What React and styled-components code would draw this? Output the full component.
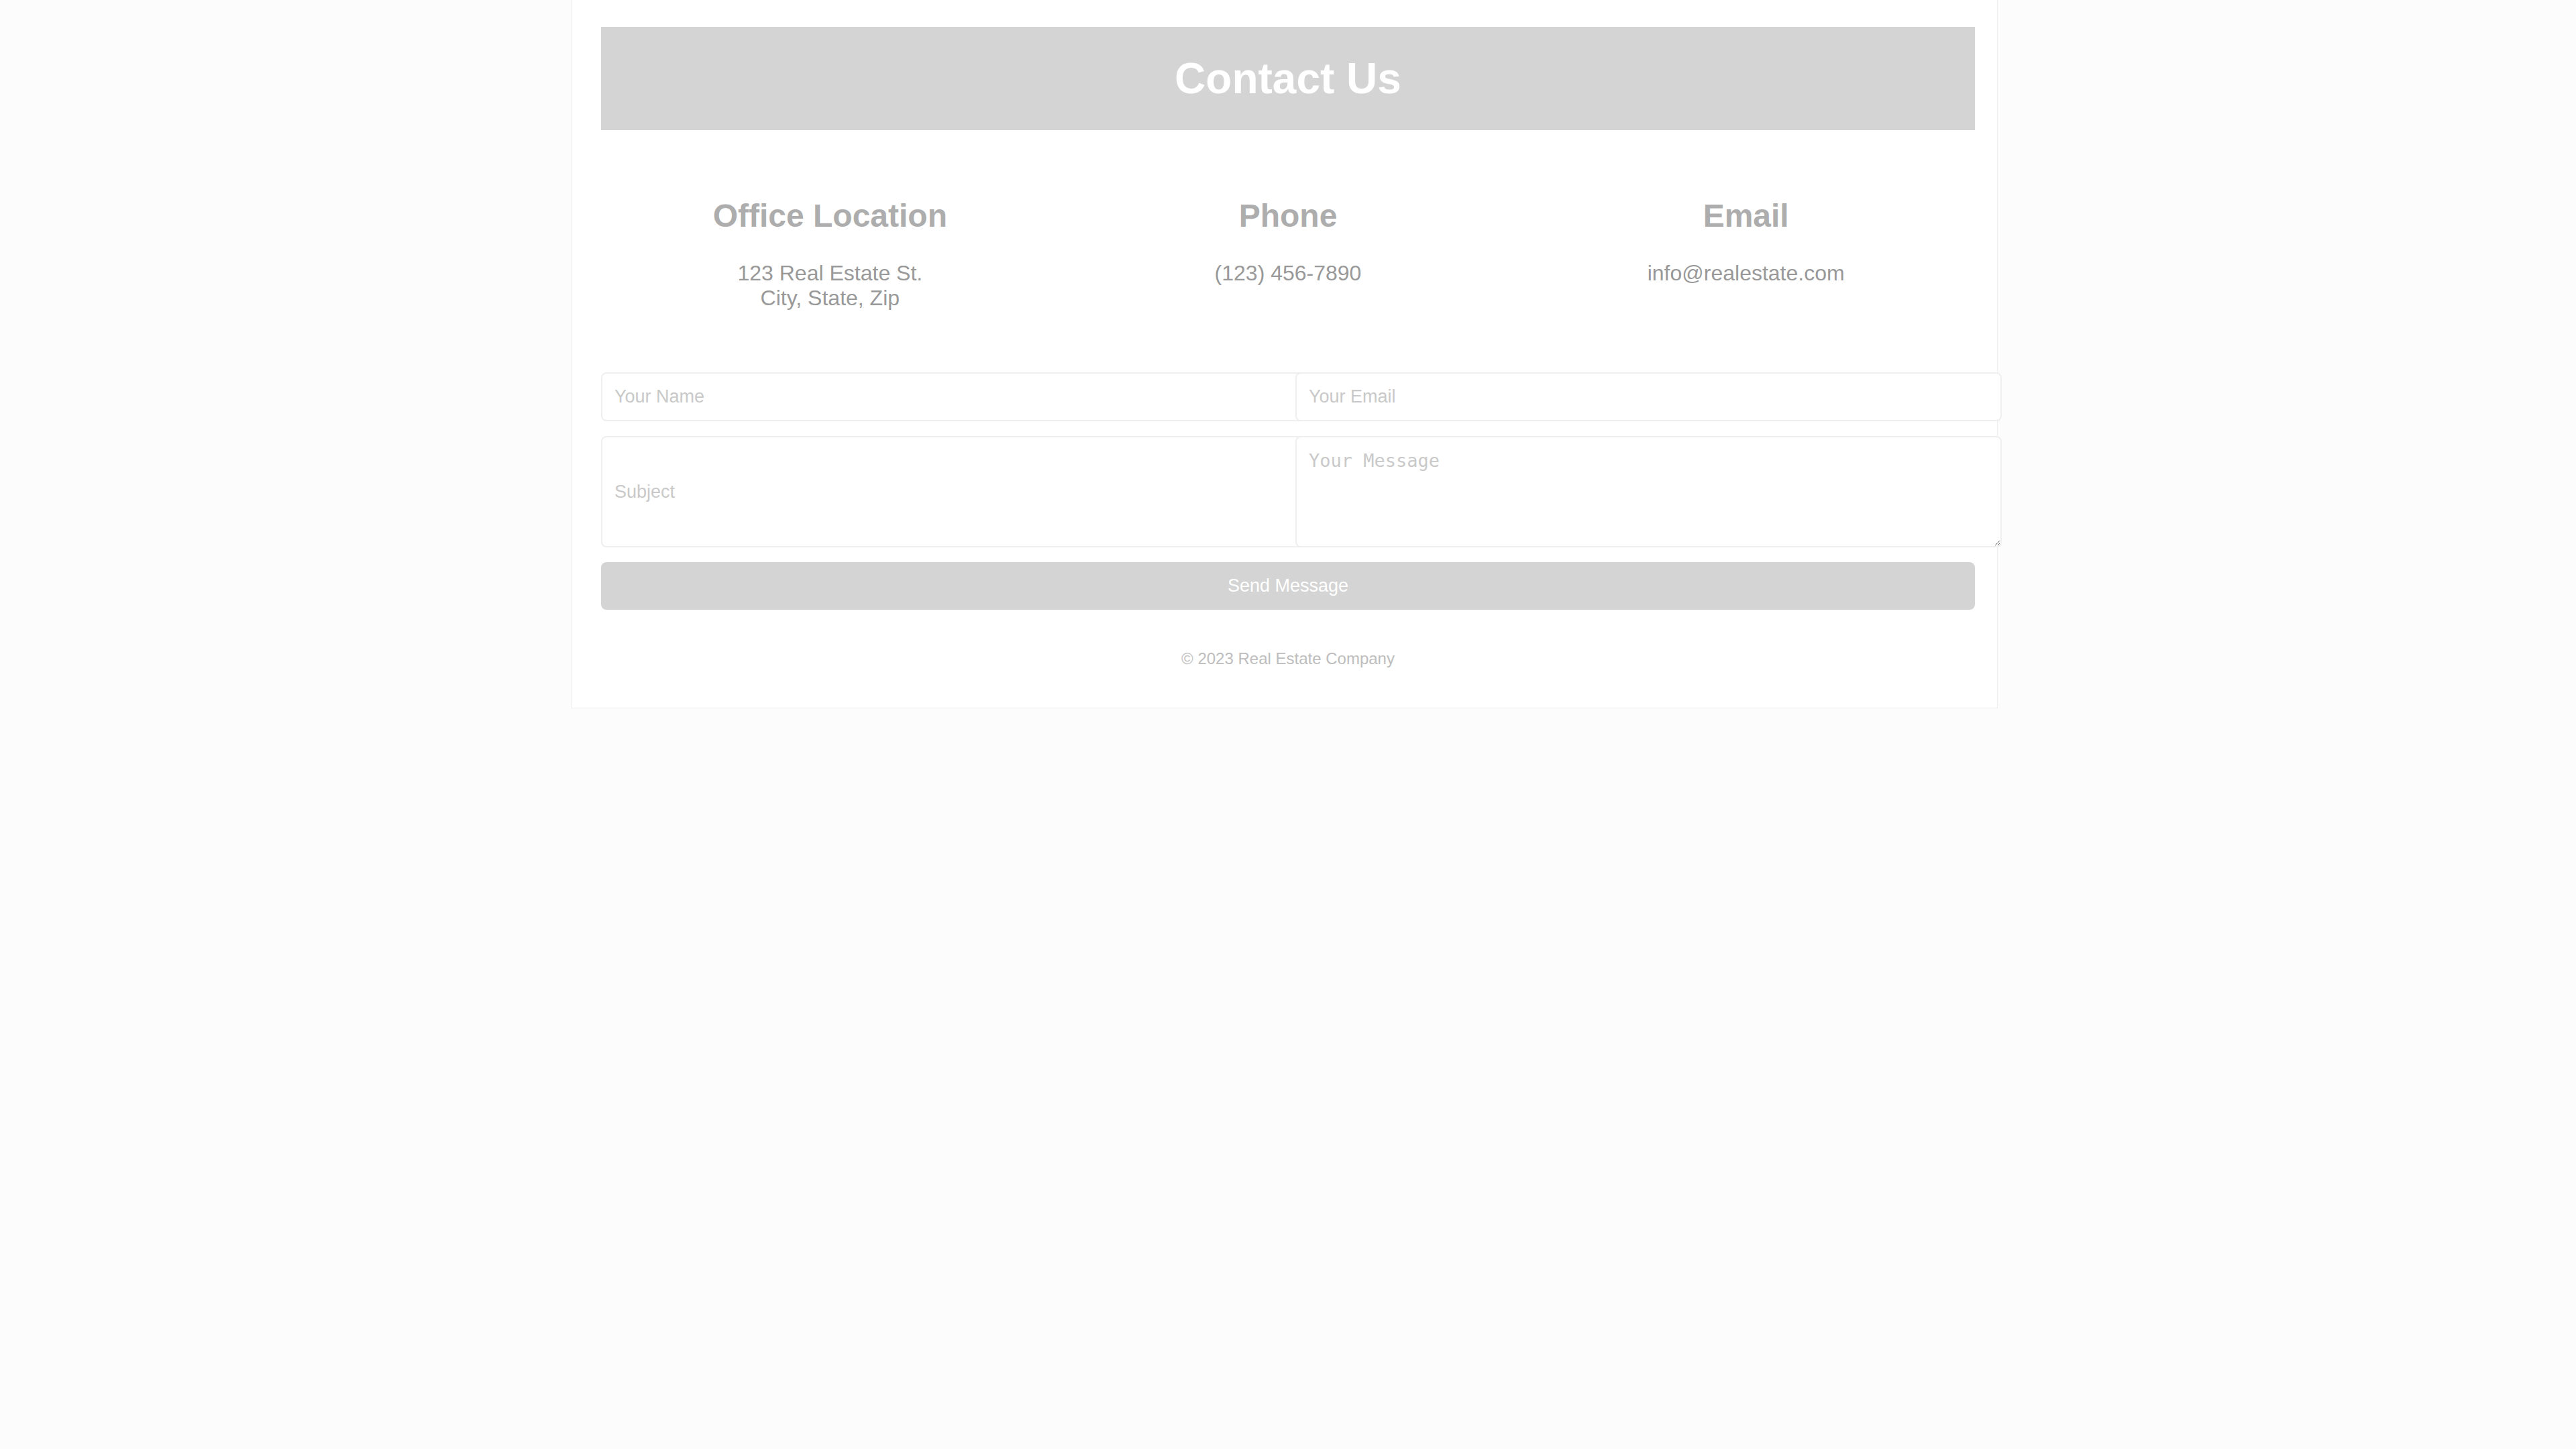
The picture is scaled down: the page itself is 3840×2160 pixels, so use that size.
import React from 'react'
import styled, { createGlobalStyle } from 'styled-components';

const GlobalStyle = createGlobalStyle`
    body {
        margin: 0;
        background-color: #fcfcfc;
        font-family: 'Liberation Sans', Arial, sans-serif;
    }
`;

const PageWrapper = styled.div`
    width: 2048px;
    margin-left: calc(50% - 1069px);
    padding: 40px 33px 44px 44px;
    background-color: #ffffff;
    border: 1px solid #eeeeee;
    border-top: none;
`;

const Banner = styled.header`
    background-color: #d4d4d4;
    padding: 40px 0;
    text-align: center;
`;

const Title = styled.h1`
    margin: 0;
    font-size: 64px;
    font-weight: bold;
    color: #ffffff;
`;

const InfoRow = styled.section`
    display: grid;
    grid-template-columns: repeat(3, 1fr);
    margin: 100px 0 92px;
    text-align: center;
`;

const InfoTitle = styled.h3`
    margin: 0 0 40px;
    font-size: 48px;
    font-weight: bold;
    color: #adadad;
`;

const InfoText = styled.p`
    margin: 0;
    font-size: 32px;
    color: #999999;
`;

const ContactForm = styled.form`
    display: grid;
    grid-template-columns: 1fr 1fr;
    gap: 22px;
`;

const Field = styled.input`
    box-sizing: content-box;
    width: 100%;
    padding: 19px 18px;
    margin: 0;
    border: 2px solid #efefef;
    border-radius: 8px;
    background-color: #ffffff;
    font-family: 'Liberation Sans', Arial, sans-serif;
    font-size: 27px;
    color: #777;
    outline: none;
    &::placeholder {
        color: #c9c9c9;
    }
`;

const MessageBox = styled.textarea`
    box-sizing: content-box;
    width: 100%;
    height: 124px;
    padding: 19px 18px;
    margin: 0;
    border: 2px solid #efefef;
    border-radius: 8px;
    background-color: #ffffff;
    font-family: 'DejaVu Sans Mono', monospace;
    font-size: 27px;
    color: #777;
    outline: none;
    &::placeholder {
        color: #c9c9c9;
    }
`;

const SendButton = styled.button`
    grid-column: 1 / -1;
    padding: 20px 0;
    border: none;
    border-radius: 8px;
    background-color: #d4d4d4;
    color: #ffffff;
    font-family: 'Liberation Sans', Arial, sans-serif;
    font-size: 27px;
    cursor: pointer;
`;

const Footer = styled.footer`
    margin: 59px 0 15px;
    text-align: center;
    font-size: 24px;
    color: #bdbdbd;
`;

const infoItems = [
    { title: 'Office Location', lines: ['123 Real Estate St.', 'City, State, Zip'] },
    { title: 'Phone', lines: ['(123) 456-7890'] },
    { title: 'Email', lines: ['info@realestate.com'] },
];

const App = () => {
    return (
        <>
            <GlobalStyle />
            <PageWrapper>
                <Banner>
                    <Title>Contact Us</Title>
                </Banner>
                <InfoRow>
                    {infoItems.map((item) => (
                        <div key={item.title}>
                            <InfoTitle>{item.title}</InfoTitle>
                            <InfoText>
                                {item.lines.map((line, i) => (
                                    <React.Fragment key={line}>
                                        {i > 0 && <br />}
                                        {line}
                                    </React.Fragment>
                                ))}
                            </InfoText>
                        </div>
                    ))}
                </InfoRow>
                <ContactForm onSubmit={(e) => e.preventDefault()}>
                    <Field type="text" placeholder="Your Name" />
                    <Field type="email" placeholder="Your Email" />
                    <Field type="text" placeholder="Subject" />
                    <MessageBox placeholder="Your Message" />
                    <SendButton type="submit">Send Message</SendButton>
                </ContactForm>
                <Footer>© 2023 Real Estate Company</Footer>
            </PageWrapper>
        </>
    );
};

export default App;
